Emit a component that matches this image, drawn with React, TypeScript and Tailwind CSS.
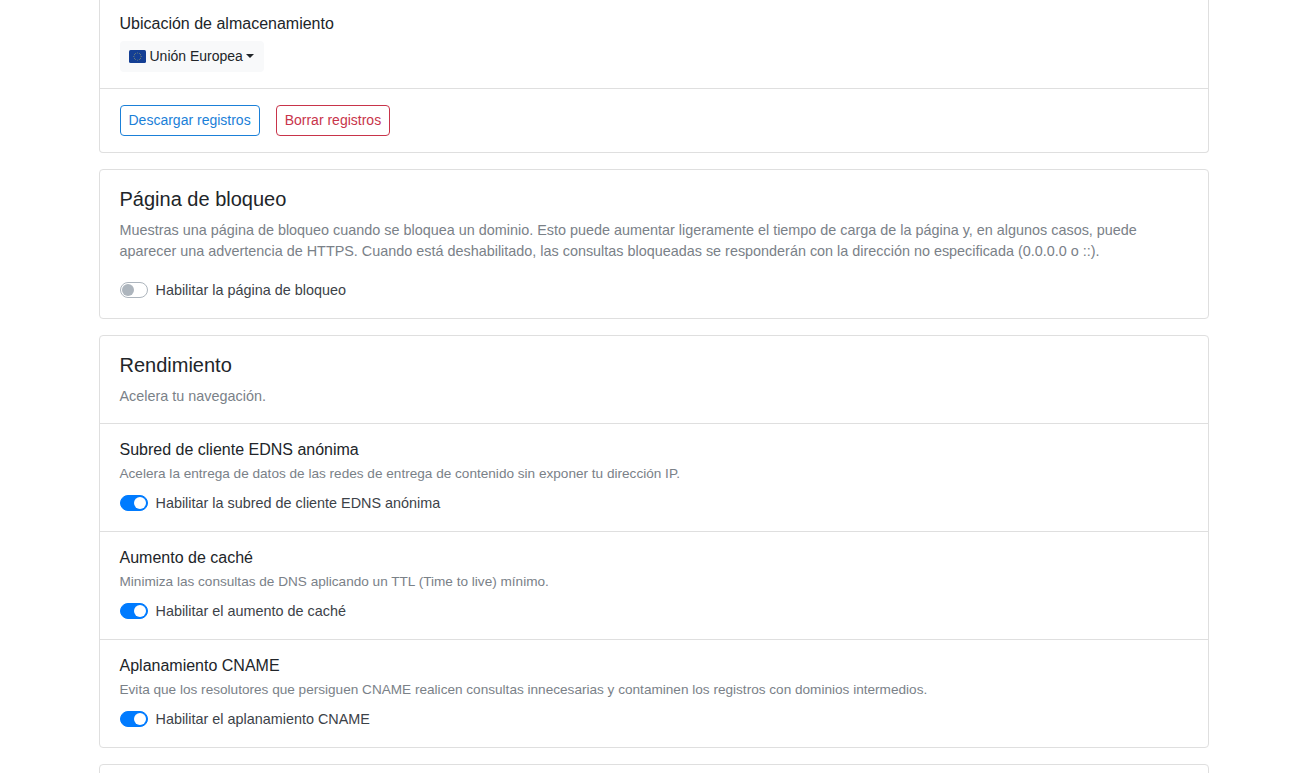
const sans = "font-['Liberation_Sans',Arial,sans-serif]";

function Toggle({ on, label }: { on: boolean; label: string }) {
  return (
    <div className="flex items-center h-[22px] gap-2">
      {on ? (
        <span className="w-7 h-4 rounded-full bg-[#007bff] border border-[#007bff] flex items-center justify-end pr-[1px]">
          <span className="w-3 h-3 rounded-full bg-white" />
        </span>
      ) : (
        <span className="w-7 h-4 rounded-full bg-white border border-[#adb5bd] flex items-center pl-[1px]">
          <span className="w-3 h-3 rounded-full bg-[#adb5bd]" />
        </span>
      )}
      <span className="text-[14.4px] leading-[22px] text-[#3c4248]">{label}</span>
    </div>
  );
}

function Row({ title, desc, label }: { title: string; desc: string; label: string }) {
  return (
    <div className="h-[108px] border-t border-[#dfdfdf] px-5 pt-[16px]">
      <div className="text-base leading-[20px] text-[#212529]">{title}</div>
      <div className="text-[13.6px] leading-[20px] mt-[4px] text-[#7a8188]">{desc}</div>
      <div className="mt-[8px]">
        <Toggle on label={label} />
      </div>
    </div>
  );
}

function EuFlag() {
  const stars = Array.from({ length: 12 }, (_, i) => {
    const a = (i / 12) * 2 * Math.PI;
    return [8.5 + 3.6 * Math.cos(a), 6.5 + 3.6 * Math.sin(a)];
  });
  return (
    <svg width="17" height="13" viewBox="0 0 17 13" className="shrink-0">
      <rect width="17" height="13" rx="1.5" fill="#143f94" />
      {stars.map(([x, y], i) => (
        <circle key={i} cx={x} cy={y} r="0.45" fill="#c9c25a" />
      ))}
    </svg>
  );
}

export default function App() {
  return (
    <div className={`${sans} h-[773px] overflow-hidden bg-white`}>
      <div className="w-[1110px] ml-[98.5px] flex flex-col gap-4">
        <div className="h-[153px] border border-t-0 border-[#dfdfdf] rounded-b">
          <div className="h-[88px] px-5 pt-[14px]">
            <div className="text-base leading-[20px] text-[#212529]">Ubicación de almacenamiento</div>
            <div className="mt-[7px] inline-flex items-center h-[31px] pl-[9px] pr-[10px] rounded bg-[#f8f9fa] text-[14px] text-[#212529]">
              <EuFlag />
              <span className="ml-1">Unión Europea</span>
              <span className="ml-[3px] mb-[2px] w-0 h-0 border-x-[4.8px] border-x-transparent border-t-[4.8px] border-t-[#212529]" />
            </div>
          </div>
          <div className="border-t border-[#dfdfdf] px-5 pt-4 flex gap-4">
            <button className="h-[31px] px-2 rounded border border-[#1b80d8] text-[#1b80d8] text-[14px]">Descargar registros</button>
            <button className="h-[31px] px-2 rounded border border-[#c8344a] text-[#c8344a] text-[14px]">Borrar registros</button>
          </div>
        </div>

        <div className="h-[150px] border border-[#dfdfdf] rounded px-5 pt-[17px]">
          <div className="text-[20px] leading-[24px] text-[#212529]">Página de bloqueo</div>
          <p className="mt-[8.6px] text-[14.4px] leading-[21.6px] text-[#7a8188]">
            Muestras una página de bloqueo cuando se bloquea un dominio. Esto puede aumentar ligeramente el tiempo de carga de la página y, en algunos casos, puede aparecer una advertencia de HTTPS. Cuando está deshabilitado, las consultas bloqueadas se responderán con la dirección no especificada (0.0.0.0 o ::).
          </p>
          <div className="mt-[16.2px]">
            <Toggle on={false} label="Habilitar la página de bloqueo" />
          </div>
        </div>

        <div className="h-[413px] border border-[#dfdfdf] rounded">
          <div className="h-[87px] px-5 pt-[17px]">
            <div className="text-[20px] leading-[24px] text-[#212529]">Rendimiento</div>
            <p className="mt-[8px] text-[14.4px] leading-[22px] text-[#7a8188]">Acelera tu navegación.</p>
          </div>
          <Row
            title="Subred de cliente EDNS anónima"
            desc="Acelera la entrega de datos de las redes de entrega de contenido sin exponer tu dirección IP."
            label="Habilitar la subred de cliente EDNS anónima"
          />
          <Row
            title="Aumento de caché"
            desc="Minimiza las consultas de DNS aplicando un TTL (Time to live) mínimo."
            label="Habilitar el aumento de caché"
          />
          <Row
            title="Aplanamiento CNAME"
            desc="Evita que los resolutores que persiguen CNAME realicen consultas innecesarias y contaminen los registros con dominios intermedios."
            label="Habilitar el aplanamiento CNAME"
          />
        </div>

        <div className="h-[100px] border border-[#dfdfdf] rounded" />
      </div>
    </div>
  );
}
